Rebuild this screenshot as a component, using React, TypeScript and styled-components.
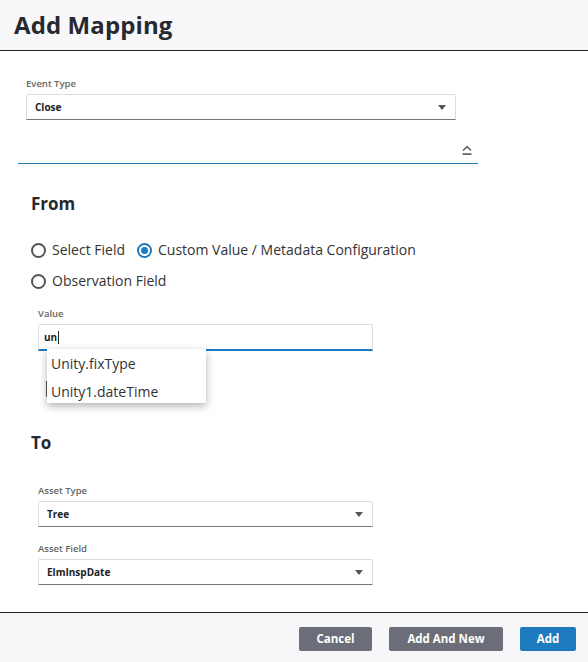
import React from "react";
import styled, { createGlobalStyle } from "styled-components";

const Global = createGlobalStyle`
  html, body { margin: 0; padding: 0; background: #fff; }
  body { font-family: "Open Sans", "Liberation Sans", sans-serif; color: #333; }
  * { box-sizing: border-box; }
`;

const Page = styled.div`
  width: 588px;
  height: 662px;
  display: flex;
  flex-direction: column;
  overflow: hidden;
`;

const Header = styled.header`
  height: 51px;
  flex: none;
  background: #f8f8fa;
  border-bottom: 1.5px solid #222;
  display: flex;
  align-items: center;
  padding: 0 14px 2px;
`;

const Title = styled.h1`
  margin: 0;
  font-size: 24px;
  font-weight: 700;
  color: #262a30;
  letter-spacing: 0.1px;
`;

const Body = styled.main`
  flex: 1;
  display: flex;
  flex-direction: column;
  padding: 26px 0 0 0;
  position: relative;
`;

const TopBlock = styled.div`
  display: flex;
  flex-direction: column;
  padding: 0 0 0 18px;
  width: 478px;
`;

const Field = styled.div<{ $indent?: number; $width?: number }>`
  display: flex;
  flex-direction: column;
  gap: 3px;
  margin-left: ${(p) => p.$indent ?? 0}px;
  width: ${(p) => p.$width ?? 335}px;
`;

const Label = styled.label`
  font-size: 9.5px;
  font-weight: 600;
  color: #666;
  line-height: 14px;
`;

const SelectBox = styled.div`
  height: 26px;
  border: 1px solid #ddd;
  border-bottom: 1.5px solid #777;
  border-radius: 2px 2px 0 0;
  display: flex;
  align-items: center;
  justify-content: space-between;
  padding: 0 9px 0 8px;
  font-size: 10px;
  font-weight: 700;
  color: #222;
  background: #fff;
`;

const Caret = styled.span`
  width: 0;
  height: 0;
  border-left: 4.5px solid transparent;
  border-right: 4.5px solid transparent;
  border-top: 5px solid #555;
  margin-top: 1px;
`;

const CollapseRow = styled.div`
  margin-top: 17px;
  height: 27px;
  border-bottom: 1px solid #2b7bb9;
  display: flex;
  justify-content: flex-end;
  align-items: center;
  padding-right: 5px;
`;

const Section = styled.section`
  padding: 0 0 0 31px;
  display: flex;
  flex-direction: column;
`;

const SectionTitle = styled.h2`
  margin: 0;
  font-size: 17px;
  font-weight: 700;
  color: #262a30;
  line-height: 24px;
`;

const RadioGroup = styled.div`
  display: flex;
  flex-wrap: wrap;
  width: 420px;
  row-gap: 9px;
  column-gap: 12px;
  margin-top: 23px;
`;

const RadioItem = styled.label`
  display: flex;
  align-items: center;
  gap: 6px;
  font-size: 14px;
  color: #333;
  line-height: 22px;
`;

const RadioCircle = styled.span<{ $on?: boolean }>`
  width: 15px;
  height: 15px;
  border-radius: 50%;
  border: 2px solid ${(p) => (p.$on ? "#1f7bbf" : "#555")};
  display: flex;
  align-items: center;
  justify-content: center;
  flex: none;
  &::after {
    content: "";
    display: ${(p) => (p.$on ? "block" : "none")};
    width: 7px;
    height: 7px;
    border-radius: 50%;
    background: #1f7bbf;
  }
`;

const InputWrap = styled.div`
  position: relative;
`;

const TextInput = styled.div`
  height: 27px;
  border: 1px solid #ddd;
  border-bottom: 2px solid #1f7bbf;
  border-radius: 2px 2px 0 0;
  display: flex;
  align-items: center;
  padding: 0 5px;
  font-size: 10px;
  font-weight: 700;
  color: #222;
`;

const Cursor = styled.span`
  display: inline-block;
  width: 1px;
  height: 13px;
  background: #222;
  margin-left: 1px;
`;

const Underlay = styled.div`
  margin-top: 30px;
  margin-left: 8px;
  width: 12px;
  height: 16px;
  border-left: 1px solid #555;
  border-bottom: 1px solid #999;
`;

const Menu = styled.ul`
  position: absolute;
  left: 9px;
  top: 25px;
  width: 159px;
  height: 54px;
  margin: 0;
  padding: 1px 0 0;
  list-style: none;
  background: #fff;
  box-shadow: 0 3px 8px rgba(0, 0, 0, 0.3);
  overflow: hidden;
  z-index: 2;
`;

const MenuItem = styled.li`
  font-size: 14px;
  color: #333;
  line-height: 28px;
  padding-left: 4px;
  height: 28px;
`;

const Footer = styled.footer`
  height: 50px;
  flex: none;
  background: #f6f6f8;
  border-top: 1.5px solid #222;
  display: flex;
  justify-content: flex-end;
  align-items: center;
  gap: 17px;
  padding: 0 12px 0 0;
`;

const Button = styled.button<{ $primary?: boolean; $w: number }>`
  height: 24px;
  width: ${(p) => p.$w}px;
  border: none;
  border-radius: 2px;
  background: ${(p) => (p.$primary ? "#1f7bbf" : "#6b6e78")};
  color: #fff;
  font-family: "Open Sans", "Liberation Sans", sans-serif;
  font-weight: 700;
  font-size: 11.5px;
  padding: 0;
  margin-top: 2px;
`;

export default function App() {
  return (
    <Page>
      <Global />
      <Header>
        <Title>Add Mapping</Title>
      </Header>
      <Body>
        <TopBlock>
          <Field $indent={8} $width={430}>
            <Label>Event Type</Label>
            <SelectBox>
              Close
              <Caret />
            </SelectBox>
          </Field>
          <CollapseRow>
            <svg width="12" height="11" viewBox="0 0 12 11">
              <path d="M2 5.5 L6 1.8 L10 5.5" fill="none" stroke="#555" strokeWidth="1.4" />
              <rect x="1.5" y="8.3" width="9" height="1.6" fill="#555" />
            </svg>
          </CollapseRow>
        </TopBlock>

        <Section style={{ marginTop: 28 }}>
          <SectionTitle>From</SectionTitle>
          <RadioGroup>
            <RadioItem>
              <RadioCircle />
              Select Field
            </RadioItem>
            <RadioItem>
              <RadioCircle $on />
              Custom Value / Metadata Configuration
            </RadioItem>
            <RadioItem>
              <RadioCircle />
              Observation Field
            </RadioItem>
          </RadioGroup>
          <Field $indent={7} style={{ marginTop: 15 }}>
            <Label>Value</Label>
            <InputWrap>
              <TextInput>
                un
                <Cursor />
              </TextInput>
              <Menu>
                <MenuItem>Unity.fixType</MenuItem>
                <MenuItem>Unity1.dateTime</MenuItem>
              </Menu>
              <Underlay />
            </InputWrap>
          </Field>
        </Section>

        <Section style={{ marginTop: 34 }}>
          <SectionTitle>To</SectionTitle>
          <Field $indent={7} style={{ marginTop: 29 }}>
            <Label>Asset Type</Label>
            <SelectBox>
              Tree
              <Caret />
            </SelectBox>
          </Field>
          <Field $indent={7} style={{ marginTop: 15 }}>
            <Label>Asset Field</Label>
            <SelectBox>
              ElmInspDate
              <Caret />
            </SelectBox>
          </Field>
        </Section>
      </Body>
      <Footer>
        <Button $w={73}>Cancel</Button>
        <Button $w={114}>Add And New</Button>
        <Button $w={56} $primary>
          Add
        </Button>
      </Footer>
    </Page>
  );
}
